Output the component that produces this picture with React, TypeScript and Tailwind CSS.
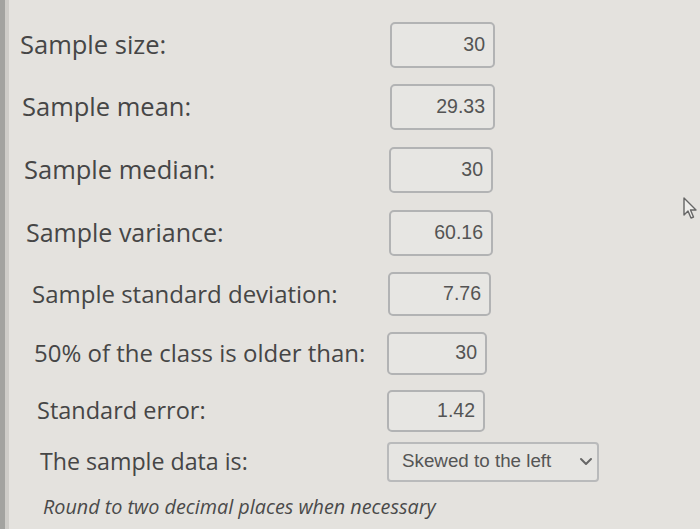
import React from "react";

type Row = {
  label: string;
  value: string;
  h: string;
  pl: string;
  fs: string;
  bw: string;
  bh: string;
  ml: string;
};

const rows: Row[] = [
  { label: "Sample size:", value: "30", h: "h-[63px]", pl: "pl-[20px]", fs: "text-[25.5px]", bw: "w-[105px]", bh: "h-[46px]", ml: "ml-[390px]" },
  { label: "Sample mean:", value: "29.33", h: "h-[62px]", pl: "pl-[22px]", fs: "text-[25.5px]", bw: "w-[105px]", bh: "h-[46px]", ml: "ml-[390px]" },
  { label: "Sample median:", value: "30", h: "h-[63px]", pl: "pl-[24px]", fs: "text-[25.5px]", bw: "w-[104px]", bh: "h-[46px]", ml: "ml-[389px]" },
  { label: "Sample variance:", value: "60.16", h: "h-[63px]", pl: "pl-[26px]", fs: "text-[25px]", bw: "w-[104px]", bh: "h-[46px]", ml: "ml-[389px]" },
  { label: "Sample standard deviation:", value: "7.76", h: "h-[60px]", pl: "pl-[32px]", fs: "text-[24px]", bw: "w-[103px]", bh: "h-[44px]", ml: "ml-[388px]" },
  { label: "50% of the class is older than:", value: "30", h: "h-[58px]", pl: "pl-[34px]", fs: "text-[24px]", bw: "w-[100px]", bh: "h-[43px]", ml: "ml-[387px]" },
  { label: "Standard error:", value: "1.42", h: "h-[58px]", pl: "pl-[37px]", fs: "text-[23.5px]", bw: "w-[98px]", bh: "h-[42px]", ml: "ml-[387px]" },
];

export default function App() {
  return (
    <div className="relative w-[700px] h-[529px] overflow-hidden bg-[#e4e2de] text-[#464646]" style={{ fontFamily: "'Open Sans', 'Noto Sans', sans-serif" }}>
      <div className="absolute left-0 top-0 h-full w-[5px] bg-[#a3a3a0]" />
      <div className="absolute left-[5px] top-0 h-full w-[4px] bg-[#cfcdc9]" />
      <div className="flex flex-col pt-[13px]">
        {rows.map((r) => (
          <div key={r.label} className={`relative flex items-center ${r.h}`}>
            <div className={`absolute left-0 ${r.pl} ${r.fs} leading-none whitespace-nowrap`}>{r.label}</div>
            <div
              className={`${r.ml} ${r.bw} ${r.bh} flex items-center justify-end pr-[8px] rounded-[5px] border-2 border-[#b2b3b4] bg-[#e7e6e3] text-[19.5px] text-[#545454]`}
              style={{ fontFamily: "'Liberation Sans', Arial, sans-serif" }}
            >
              {r.value}
            </div>
          </div>
        ))}
        <div className="relative flex items-center h-[43px]">
          <div className="absolute left-0 pl-[40px] text-[23.2px] leading-none whitespace-nowrap">The sample data is:</div>
          <div
            className="ml-[387px] w-[212px] h-[40px] flex items-center justify-between pl-[13px] pr-[4px] rounded-[4px] border-2 border-[#b9babb] bg-[#e6e5e2] text-[18.8px] text-[#555]"
            style={{ fontFamily: "'Liberation Sans', Arial, sans-serif" }}
          >
            <span>Skewed to the left</span>
            <svg width="14" height="9" viewBox="0 0 14 9" fill="none">
              <path d="M2 2 L7 7 L12 2" stroke="#666" strokeWidth="2" strokeLinecap="round" strokeLinejoin="round" />
            </svg>
          </div>
        </div>
        <div className="flex items-center h-[48px] pl-[43px] italic text-[19.8px] text-[#4a4a4a] whitespace-nowrap">
          Round to two decimal places when necessary
        </div>
      </div>
      <svg className="absolute left-[683px] top-[197px]" width="16" height="24" viewBox="0 0 16 24" fill="none">
        <path d="M1 1 L1 18 L5 14 L8 21 L10.5 20 L7.5 13 L13 13 Z" fill="#efeeeb" stroke="#666" strokeWidth="1.4" strokeLinejoin="round" />
      </svg>
    </div>
  );
}
